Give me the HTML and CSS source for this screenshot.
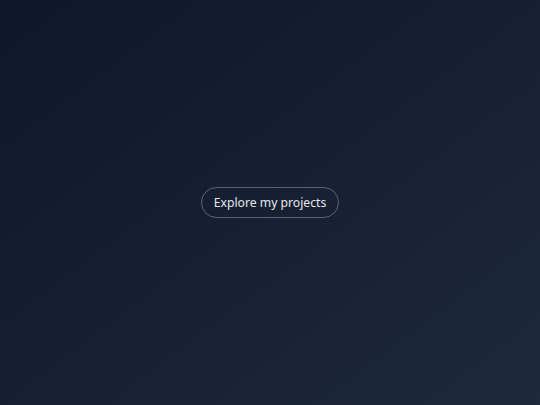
FILE: index.html
```html
<!DOCTYPE html>
<html lang="en">
<head>
<meta charset="utf-8">
<title>Explore</title>
<link rel="stylesheet" href="styles.css">
</head>
<body>
<main class="hero">
  <a class="pill-btn" href="#">Explore my projects</a>
</main>
</body>
</html>
```
FILE: styles.css
```css
html, body {
  margin: 0;
  padding: 0;
  height: 100%;
}
body {
  background: linear-gradient(to bottom right, #0f172a, #1e293b);
  font-family: "Noto Sans", "Open Sans", sans-serif;
}
.hero {
  height: 100%;
  display: flex;
  align-items: center;
  justify-content: center;
}
.pill-btn {
  display: inline-block;
  padding: 6px 12px;
  border: 1px solid rgba(255, 255, 255, 0.3);
  border-radius: 9999px;
  color: #e5e7eb;
  font-size: 12.2px;
  line-height: 17px;
  text-decoration: none;
}
```
